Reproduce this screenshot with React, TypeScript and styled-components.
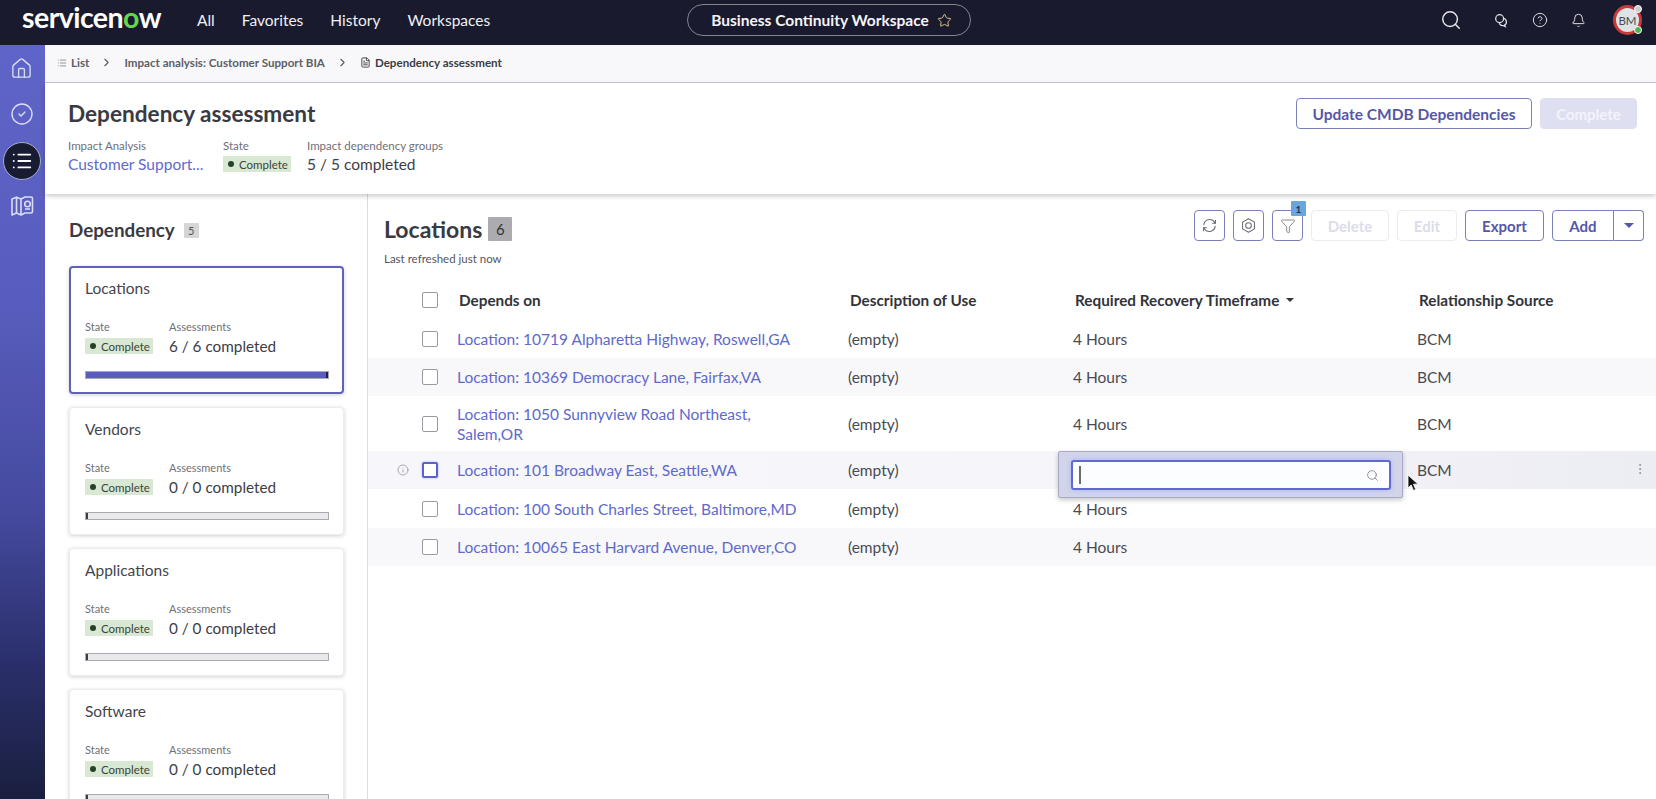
import React from "react";
import styled, { createGlobalStyle } from "styled-components";
import { Home, CircleCheck, List as ListIcon, CircleHelp, Bell, Search, Star, ChevronRight, FileText, Info, MoreVertical, Funnel } from "lucide-react";

const Global = createGlobalStyle`
  html, body { margin: 0; padding: 0; height: 100%; overflow: hidden; background: #fff; }
  body { font-family: Lato, "Liberation Sans", sans-serif; color: #3d3d45; }
  * { box-sizing: border-box; }
`;

const Page = styled.div`
  width: 1656px; height: 799px; display: flex; flex-direction: column; overflow: hidden;
`;
const TopBar = styled.header`
  height: 45px; flex: none; background: #1a1a2e; display: grid; grid-template-columns: 1fr auto 1fr; align-items: center; color: #fff;
`;
const TopLeft = styled.div`display: flex; align-items: center; padding-left: 22px;`;
const Logo = styled.div`
  font-size: 28.5px; font-weight: 700; letter-spacing: -0.55px; line-height: 1; width: 175px; color: #fff; margin-top: -10px;
`;
const LogoO = styled.span`color: #62d84e;`;
const NavItem = styled.a`
  font-size: 15.5px; color: #eef0f4; margin-right: 27px; margin-top: -5px;
`;
const Pill = styled.div`
  height: 32px; width: 284px; border: 1.5px solid #85858f; border-radius: 16px; display: flex; align-items: center; justify-content: center; gap: 8px;
  font-size: 15.5px; font-weight: 700; color: #f4f4f6; margin: -5px 0 0 2px; padding-left: 5px;
`;
const TopRight = styled.div`
  display: flex; align-items: center; justify-content: flex-end; padding-right: 14px; margin-top: -5px;
`;
const TopIcon = styled.span<{ $w: number }>`
  display: flex; align-items: center; justify-content: center; width: ${(p) => p.$w}px; color: #e6e6ea;
`;
const Avatar = styled.div`
  position: relative; width: 29px; height: 30px; border-radius: 50%; border: 3px solid #c83a3a; background: #dfe3e6; color: #4a4a52;
  font-size: 11.5px; display: flex; align-items: center; justify-content: center; margin-left: 15px;
`;
const AvatarDot = styled.i<{ $c: string; $top: boolean }>`
  position: absolute; right: -3px; ${(p) => (p.$top ? "top: -3px;" : "bottom: -2px;")} width: 8px; height: 8px; border-radius: 50%; background: ${(p) => p.$c}; border: 1px solid #fff;
`;
const Body = styled.div`flex: 1; display: flex; min-height: 0;`;
const Rail = styled.nav`
  width: 45px; flex: none; padding-right: 2px; display: flex; flex-direction: column; align-items: center;
  background: linear-gradient(180deg, #5f64c8 0%, #585cbc 35%, #454a9f 62%, #2a2f6b 82%, #1a1f3f 100%);
`;
const RailItem = styled.div<{ $active?: boolean }>`
  width: 38px; height: 46px; flex: none; display: flex; align-items: center; justify-content: center; color: #d9dcf6;
  ${(p) => p.$active && `
    height: 38px; margin: 5px 0 3px; border-radius: 50%; background: #171c33; border: 1.5px solid #a9acc8; color: #fff;
  `}
`;
const Content = styled.main`flex: 1; display: flex; flex-direction: column; min-width: 0;`;
const Crumbs = styled.div`
  height: 38px; flex: none; background: #f8f8fb; border-bottom: 1px solid #c9c9cf; display: flex; align-items: center; padding: 0 0 2px 12px;
  font-size: 11.6px; font-weight: 700; color: #5e5e66;
`;
const Crumb = styled.span<{ $dark?: boolean }>`
  display: flex; align-items: center; gap: 4px; ${(p) => p.$dark && "color: #3c3c44;"}
`;
const CrumbSep = styled.span`display: flex; width: 35px; justify-content: center; color: #5a5a62;`;
const HeaderCard = styled.section`
  height: 111px; flex: none; background: #fff; display: flex; justify-content: space-between; padding: 16px 19px 0 23px;
  box-shadow: 0 2px 5px rgba(0,0,0,0.22); position: relative; z-index: 2;
`;
const Title = styled.h1`margin: 0; font-size: 22.6px; line-height: 30px; font-weight: 700; color: #3a3a42;`;
const MetaRow = styled.div`display: flex; margin-top: 10px;`;
const Meta = styled.div<{ $w: number }>`width: ${(p) => p.$w}px;`;
const Label = styled.div`font-size: 11.5px; line-height: 14px; color: #6f6f77;`;
const MetaLink = styled.div`font-size: 15.5px; line-height: 20px; margin-top: 1px; color: #6069cd;`;
const MetaValue = styled.div`font-size: 15.5px; line-height: 20px; margin-top: 1px; color: #3d3d45;`;
const Badge = styled.span`
  display: inline-flex; align-items: center; gap: 4px; height: 16px; padding: 0 4px 0 5px; background: #d9e8d2; font-size: 11.5px; color: #39443a; border-radius: 1px; width: 68px;
`;
const BadgeDot = styled.i`width: 6px; height: 6px; flex: none; border-radius: 50%; background: #27402a; display: block; margin-right: 1px;`;
const BadgeSlot = styled.div`margin-top: 3px; display: flex;`;
const HeaderActions = styled.div`display: flex; gap: 8px; margin-top: -1px;`;
const Btn = styled.button<{ $w?: number; $off?: boolean }>`
  font-family: inherit; height: 31px; ${(p) => (p.$w ? `width: ${p.$w}px;` : "")} background: #fff; border: 1px solid ${(p) => (p.$off ? "#ebebf1" : "#7d7fb8")}; border-radius: 4px;
  color: ${(p) => (p.$off ? "#dcdcea" : "#5557a8")}; font-size: 15px; font-weight: 700; padding: 0; display: flex; align-items: center; justify-content: center;
`;
const BtnWide = styled(Btn)`font-size: 15.5px;`;
const BtnFill = styled(Btn)`background: #dfdff2; border-color: #dfdff2; color: #f3f3fa;`;
const Columns = styled.div`flex: 1; display: flex; min-height: 0;`;
const Panel = styled.aside`
  width: 323px; flex: none; border-right: 1px solid #dcdce0; padding: 25px 23px 0 24px; overflow: hidden;
`;
const PanelHead = styled.div`display: flex; align-items: center; gap: 9px; height: 22px; margin-bottom: 25px;`;
const PanelTitle = styled.h2`margin: 0; font-size: 18.8px; font-weight: 700; color: #3a3a42; line-height: 22px;`;
const SmallCount = styled.span`width: 15px; height: 15px; background: #d6d6d8; font-size: 11px; color: #55555c; display: flex; align-items: center; justify-content: center; border-radius: 1px;`;
const Card = styled.article<{ $active?: boolean }>`
  width: 275px; height: 128px; background: #fff; border-radius: 4px; margin-bottom: 13px; padding: 11px 14px 0 15px;
  border: ${(p) => (p.$active ? "2px solid #5f62b8" : "1px solid #ececf0")};
  box-shadow: 0 1px 4px rgba(0,0,0,0.18);
  ${(p) => p.$active && "padding: 10px 13px 0 14px;"}
`;
const CardTitle = styled.h3`margin: 0; font-size: 15.5px; font-weight: 400; line-height: 20px; color: #45454d;`;
const CardMeta = styled.div`display: flex; margin-top: 22px;`;
const CardCol = styled.div<{ $w: number }>`width: ${(p) => p.$w}px;`;
const CardLabel = styled(Label)`font-size: 11px;`;
const CardValue = styled.div`font-size: 15.3px; line-height: 20px; margin-top: 2px; color: #3d3d45;`;
const CardBadge = styled.div`margin-top: 4px; display: flex;`;
const Track = styled.div`height: 8px; margin-top: 15px; background: #e9e9ec; border: 1px solid #a9a9b0; position: relative; overflow: hidden;`;
const Fill = styled.div`height: 100%; background: #5a5dbb; border-right: 2px solid #1d1f4d;`;
const Tick = styled.div`width: 2px; height: 100%; background: #3c3c44;`;
const Main = styled.section`flex: 1; min-width: 0; display: flex; flex-direction: column;`;
const ListHead = styled.div`display: flex; justify-content: space-between; padding: 16px 12px 0 16px; height: 86px; flex: none;`;
const ListTitleRow = styled.div`display: flex; align-items: center; gap: 6px; height: 24px; margin-top: 7px;`;
const ListTitle = styled.h2`margin: 0; font-size: 23px; font-weight: 700; color: #3a3a42; line-height: 24px;`;
const BigCount = styled.span`width: 24px; height: 24px; background: #acacb0; color: #333; font-size: 15px; display: flex; align-items: center; justify-content: center; border-radius: 1px;`;
const Refreshed = styled.div`font-size: 11.5px; color: #55555d; margin-top: 11px;`;
const Toolbar = styled.div`display: flex; gap: 8px; align-items: flex-start;`;
const IconBtn = styled(Btn)`width: 31px; position: relative; color: #6c6c74;`;
const FilterBadge = styled.span`
  position: absolute; top: -10px; right: -4px; width: 15px; height: 15px; background: #6aa6da; color: #1f3a55; font-size: 10px; font-weight: 700; display: flex; align-items: center; justify-content: center; border-radius: 1px;
`;
const Split = styled.div`display: flex;`;
const SplitMain = styled(Btn)`width: 62px; border-radius: 4px 0 0 4px;`;
const SplitCaret = styled(Btn)`width: 30px; border-left: none; border-radius: 0 4px 4px 0;`;
const Caret = styled.i<{ $c: string; $s: number }>`
  width: 0; height: 0; display: inline-block; border-left: ${(p) => p.$s}px solid transparent; border-right: ${(p) => p.$s}px solid transparent; border-top: ${(p) => p.$s}px solid ${(p) => p.$c};
`;
const grid = `display: grid; grid-template-columns: 54px 35px 391px 225px 344px 1fr; align-items: center;`;
const HeadRow = styled.div`${grid} height: 40px; font-size: 15.3px; font-weight: 700; color: #33333a;`;
const HeadText = styled.div`padding-left: 2px; display: flex; align-items: center; gap: 7px;`;
const Row = styled.div<{ $h: number; $bg?: string }>`
  ${grid} height: ${(p) => p.$h}px; font-size: 15.5px; color: #4a4a52; background: ${(p) => p.$bg || "#fff"}; position: relative;
`;
const Cell = styled.div`display: flex; align-items: center;`;
const InfoCell = styled(Cell)`justify-content: flex-end; padding-right: 13px; color: #8e8e96;`;
const Check = styled.span<{ $focus?: boolean }>`
  display: block; width: 16px; height: 16px; background: #fff; border-radius: 2px;
  border: ${(p) => (p.$focus ? "2px solid #5b63c9" : "1px solid #9a9aa2")};
  ${(p) => p.$focus && "box-shadow: 0 0 3px #b9bdf0;"}
`;
const RowLink = styled.a`color: #6069cd; line-height: 20px; padding-right: 40px; display: block;`;
const Popover = styled.div`
  position: absolute; left: 690px; top: 0; width: 345px; height: 47px; background: #d2d4ea; border: 1px solid #a9abc4; border-radius: 2px;
  box-shadow: 0 2px 5px rgba(0,0,0,0.22); padding: 8px 12px; z-index: 3;
`;
const SearchBox = styled.div`
  height: 30px; width: 320px; background: #fbfdff; border: 2px solid #5f69d4; border-radius: 3px; box-shadow: 0 0 5px #aeb4ee; display: flex; align-items: center; justify-content: space-between; padding: 0 10px 0 6px; color: #7d7d85;
`;
const TextCaret = styled.i`width: 1.5px; height: 18px; background: #6b6b73; display: block;`;
const Kebab = styled.span`position: absolute; right: 9px; top: 11px; color: #8f8f97; display: flex;`;
const Pointer = styled.svg`position: absolute; left: 1039px; top: 23px; z-index: 4;`;

const ChatIcon = () => (
  <svg width="15" height="15" viewBox="0 0 16 16" fill="none" stroke="currentColor" strokeWidth="1.3">
    <circle cx="6" cy="6" r="4.2" />
    <path d="M9.8 5.6a3.9 3.9 0 0 1 1.6 7.2l.6 1.6-2.2-1a3.9 3.9 0 0 1-4.2-2.6" />
  </svg>
);
const MapBook = () => (
  <svg width="24" height="22" viewBox="0 0 24 22" fill="none" stroke="currentColor" strokeWidth="1.6" strokeLinejoin="round">
    <path d="M2 4 6.5 2.2V18L2 20z" />
    <path d="M6.5 2.2 11 4v16l-4.5-2" />
    <path d="M11 4 15 2h6a1.5 1.5 0 0 1 1.5 1.5v13A1.5 1.5 0 0 1 21 18h-6l-4 2" />
    <circle cx="17.5" cy="9" r="2.8" />
    <path d="M15 14h5" />
  </svg>
);
const SyncIcon = () => (
  <svg width="17" height="17" viewBox="0 0 18 18" fill="none" stroke="currentColor" strokeWidth="1.2" strokeLinecap="round">
    <path d="M3 8a6.2 6.2 0 0 1 11-3l1 1.5" />
    <path d="M15 10a6.2 6.2 0 0 1-11 3l-1-1.5" />
    <path d="M15.3 3.4v3.2h-3" />
    <path d="M2.7 14.6v-3.2h3" />
  </svg>
);
const NutIcon = () => (
  <svg width="17" height="17" viewBox="0 0 18 18" fill="none" stroke="currentColor" strokeWidth="1.1" strokeLinejoin="round">
    <path d="M9 1.8 15.3 5.4v7.2L9 16.2 2.7 12.6V5.4z" />
    <circle cx="9" cy="9" r="3" />
  </svg>
);

const Complete = () => (
  <Badge><BadgeDot />Complete</Badge>
);

type Dep = { name: string; done: string; active?: boolean };
const deps: Dep[] = [
  { name: "Locations", done: "6 / 6 completed", active: true },
  { name: "Vendors", done: "0 / 0 completed" },
  { name: "Applications", done: "0 / 0 completed" },
  { name: "Software", done: "0 / 0 completed" },
];
const rows = [
  { name: "Location: 10719 Alpharetta Highway, Roswell,GA", h: 38, src: "BCM" },
  { name: "Location: 10369 Democracy Lane, Fairfax,VA", h: 38, bg: "#f8f8fa", src: "BCM" },
  { name: "Location: 1050 Sunnyview Road Northeast, Salem,OR", h: 55, src: "BCM" },
  { name: "Location: 101 Broadway East, Seattle,WA", h: 38, bg: "linear-gradient(90deg,#f7f7fb 0%,#f5f5fa 60%,#ececf3 100%)", src: "BCM", focus: true },
  { name: "Location: 100 South Charles Street, Baltimore,MD", h: 39, src: "" },
  { name: "Location: 10065 East Harvard Avenue, Denver,CO", h: 38, bg: "#f8f8fa", src: "" },
];

export default function App() {
  return (
    <Page>
      <Global />
      <TopBar>
        <TopLeft>
          <Logo>servicen<LogoO>o</LogoO>w</Logo>
          <NavItem>All</NavItem>
          <NavItem>Favorites</NavItem>
          <NavItem>History</NavItem>
          <NavItem>Workspaces</NavItem>
        </TopLeft>
        <Pill>Business Continuity Workspace <Star size={15} color="#e3c98a" strokeWidth={1.5} /></Pill>
        <TopRight>
          <TopIcon $w={63}><Search size={22} strokeWidth={1.6} /></TopIcon>
          <TopIcon $w={39}><ChatIcon /></TopIcon>
          <TopIcon $w={38}><CircleHelp size={16} strokeWidth={1.4} /></TopIcon>
          <TopIcon $w={39}><Bell size={15} strokeWidth={1.5} /></TopIcon>
          <Avatar>BM<AvatarDot $c="#c9cdd2" $top /><AvatarDot $c="#4fb34f" $top={false} /></Avatar>
        </TopRight>
      </TopBar>
      <Body>
        <Rail>
          <RailItem><Home size={23} strokeWidth={1.4} /></RailItem>
          <RailItem><CircleCheck size={24} strokeWidth={1.4} /></RailItem>
          <RailItem $active><ListIcon size={22} strokeWidth={2} /></RailItem>
          <RailItem><MapBook /></RailItem>
        </Rail>
        <Content>
          <Crumbs>
            <Crumb><ListIcon size={10} strokeWidth={2.2} color="#8a8a92" />List</Crumb>
            <CrumbSep><ChevronRight size={13} /></CrumbSep>
            <Crumb>Impact analysis: Customer Support BIA</Crumb>
            <CrumbSep><ChevronRight size={13} /></CrumbSep>
            <Crumb $dark><FileText size={11} />Dependency assessment</Crumb>
          </Crumbs>
          <HeaderCard>
            <div>
              <Title>Dependency assessment</Title>
              <MetaRow>
                <Meta $w={155}><Label>Impact Analysis</Label><MetaLink>Customer Support...</MetaLink></Meta>
                <Meta $w={84}><Label>State</Label><BadgeSlot><Complete /></BadgeSlot></Meta>
                <Meta $w={200}><Label>Impact dependency groups</Label><MetaValue>5 / 5 completed</MetaValue></Meta>
              </MetaRow>
            </div>
            <HeaderActions>
              <BtnWide $w={236}>Update CMDB Dependencies</BtnWide>
              <BtnFill $w={97}>Complete</BtnFill>
            </HeaderActions>
          </HeaderCard>
          <Columns>
            <Panel>
              <PanelHead><PanelTitle>Dependency</PanelTitle><SmallCount>5</SmallCount></PanelHead>
              {deps.map((d) => (
                <Card key={d.name} $active={d.active}>
                  <CardTitle>{d.name}</CardTitle>
                  <CardMeta>
                    <CardCol $w={84}><CardLabel>State</CardLabel><CardBadge><Complete /></CardBadge></CardCol>
                    <CardCol $w={150}><CardLabel>Assessments</CardLabel><CardValue>{d.done}</CardValue></CardCol>
                  </CardMeta>
                  <Track>{d.active ? <Fill /> : <Tick />}</Track>
                </Card>
              ))}
            </Panel>
            <Main>
              <ListHead>
                <div>
                  <ListTitleRow><ListTitle>Locations</ListTitle><BigCount>6</BigCount></ListTitleRow>
                  <Refreshed>Last refreshed just now</Refreshed>
                </div>
                <Toolbar>
                  <IconBtn><SyncIcon /></IconBtn>
                  <IconBtn><NutIcon /></IconBtn>
                  <IconBtn><Funnel size={16} strokeWidth={1.2} /><FilterBadge>1</FilterBadge></IconBtn>
                  <Btn $w={78} $off>Delete</Btn>
                  <Btn $w={60} $off>Edit</Btn>
                  <Btn $w={79}>Export</Btn>
                  <Split>
                    <SplitMain>Add</SplitMain>
                    <SplitCaret><Caret $c="#5557a8" $s={5} /></SplitCaret>
                  </Split>
                </Toolbar>
              </ListHead>
              <HeadRow>
                <span />
                <Cell><Check /></Cell>
                <HeadText>Depends on</HeadText>
                <HeadText>Description of Use</HeadText>
                <HeadText>Required Recovery Timeframe <Caret $c="#33333a" $s={4} /></HeadText>
                <HeadText>Relationship Source</HeadText>
              </HeadRow>
              {rows.map((r) => (
                <Row key={r.name} $h={r.h} $bg={r.bg}>
                  <InfoCell>{r.focus && <Info size={12} strokeWidth={1.5} />}</InfoCell>
                  <Cell><Check $focus={r.focus} /></Cell>
                  <RowLink>{r.name}</RowLink>
                  <div>(empty)</div>
                  <div>4 Hours</div>
                  <div>{r.src}</div>
                  {r.focus && (
                    <>
                      <Popover>
                        <SearchBox><TextCaret /><Search size={13} strokeWidth={1.5} /></SearchBox>
                      </Popover>
                      <Pointer width="12" height="18" viewBox="0 0 12 18">
                        <path d="M1 1v13l3.2-3 2.3 5.5 2.2-1L6.5 10.2H11z" fill="#111" stroke="#fff" strokeWidth="0.8" />
                      </Pointer>
                      <Kebab><MoreVertical size={14} strokeWidth={1.5} /></Kebab>
                    </>
                  )}
                </Row>
              ))}
            </Main>
          </Columns>
        </Content>
      </Body>
    </Page>
  );
}
